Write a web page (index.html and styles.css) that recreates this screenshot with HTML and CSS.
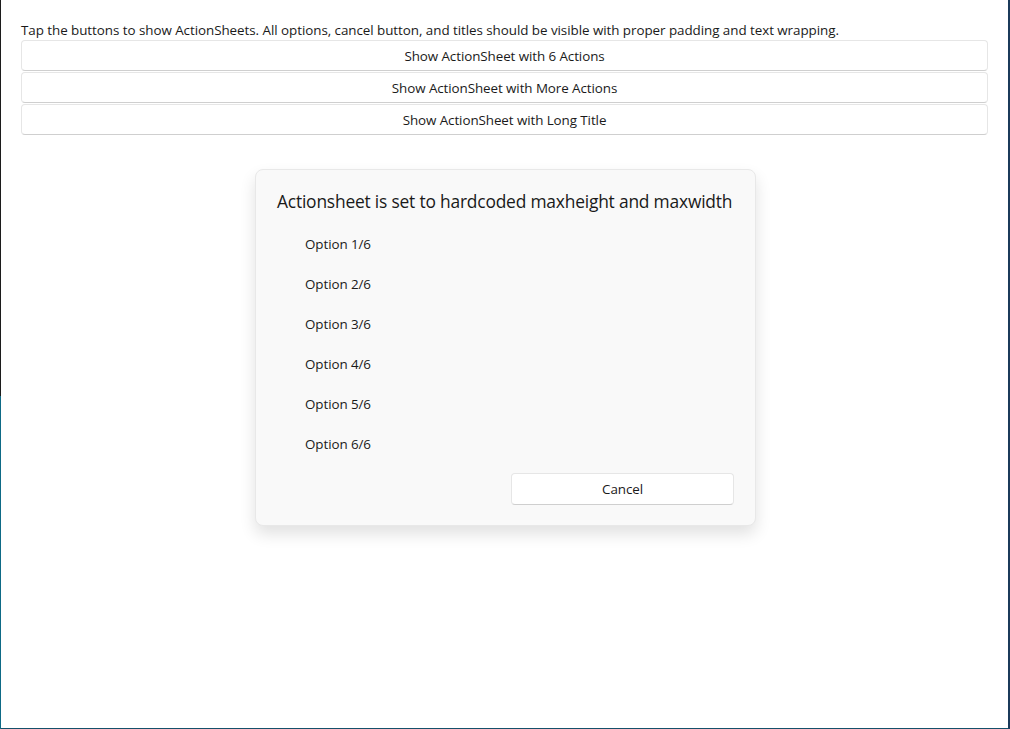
FILE: index.html
```html
<!DOCTYPE html>
<html>
<head>
<meta charset="utf-8">
<link rel="stylesheet" href="styles.css">
</head>
<body>
<div class="frame">
  <div class="content">
    <p class="intro">Tap the buttons to show ActionSheets. All options, cancel button, and titles should be visible with proper padding and text wrapping.</p>
    <div class="buttons">
      <button class="btn">Show ActionSheet with 6 Actions</button>
      <button class="btn">Show ActionSheet with More Actions</button>
      <button class="btn">Show ActionSheet with Long Title</button>
    </div>
    <div class="overlay">
      <div class="sheet">
        <h2 class="title">Actionsheet is set to hardcoded maxheight and maxwidth</h2>
        <ul class="options">
          <li>Option 1/6</li>
          <li>Option 2/6</li>
          <li>Option 3/6</li>
          <li>Option 4/6</li>
          <li>Option 5/6</li>
          <li>Option 6/6</li>
        </ul>
        <div class="actions">
          <button class="btn cancel">Cancel</button>
        </div>
      </div>
    </div>
  </div>
</div>
</body>
</html>
```
FILE: styles.css
```css
html, body {
  margin: 0;
  padding: 0;
  height: 100%;
  background: #ffffff;
}
body {
  font-family: "Open Sans", "Noto Sans", sans-serif;
  color: #1a1a1a;
}
.frame {
  box-sizing: border-box;
  height: 729px;
  width: 1010px;
  border-left: 1px solid #1c1c1c;
  border-right: 2px solid #1b3a5a;
  border-bottom: 1px solid #15506a;
  background: #ffffff;
  position: relative;
}
.frame::before {
  content: "";
  position: absolute;
  left: -1px;
  top: 396px;
  bottom: -1px;
  width: 1px;
  background: #0e6a86;
}
.content {
  padding: 20px 20px 0 20px;
}
.intro {
  margin: 0;
  font-size: 13.4px;
  line-height: 20px;
  letter-spacing: -0.05px;
}
.buttons {
  display: flex;
  flex-direction: column;
  gap: 1px;
}
.btn {
  font-family: inherit;
  font-size: 13.4px;
  letter-spacing: -0.08px;
  color: #1a1a1a;
  background: #ffffff;
  border: 1px solid #e6e6e6;
  border-bottom-color: #cfcfcf;
  border-radius: 4px;
  height: 31px;
  padding: 0;
}
.overlay {
  display: flex;
  justify-content: center;
  padding-top: 34px;
}
.sheet {
  box-sizing: border-box;
  width: 501px;
  height: 357px;
  margin-left: 2px;
  background: #f9f9f9;
  border: 1px solid #e8e8e8;
  border-radius: 8px;
  box-shadow: 0 8px 16px rgba(0, 0, 0, 0.12);
  padding: 17px 21px 0 21px;
  display: flex;
  flex-direction: column;
}
.title {
  margin: 0;
  font-size: 17.4px;
  font-weight: 400;
  line-height: 28px;
  letter-spacing: -0.2px;
  white-space: nowrap;
}
.options {
  list-style: none;
  margin: 14px 0 0 0;
  padding: 0 0 0 28px;
}
.options li {
  font-size: 13.4px;
  letter-spacing: -0.08px;
  height: 40px;
  line-height: 30px;
}
.actions {
  display: flex;
  justify-content: flex-end;
  margin-top: 4px;
}
.cancel {
  width: 223px;
  height: 32px;
}
```
